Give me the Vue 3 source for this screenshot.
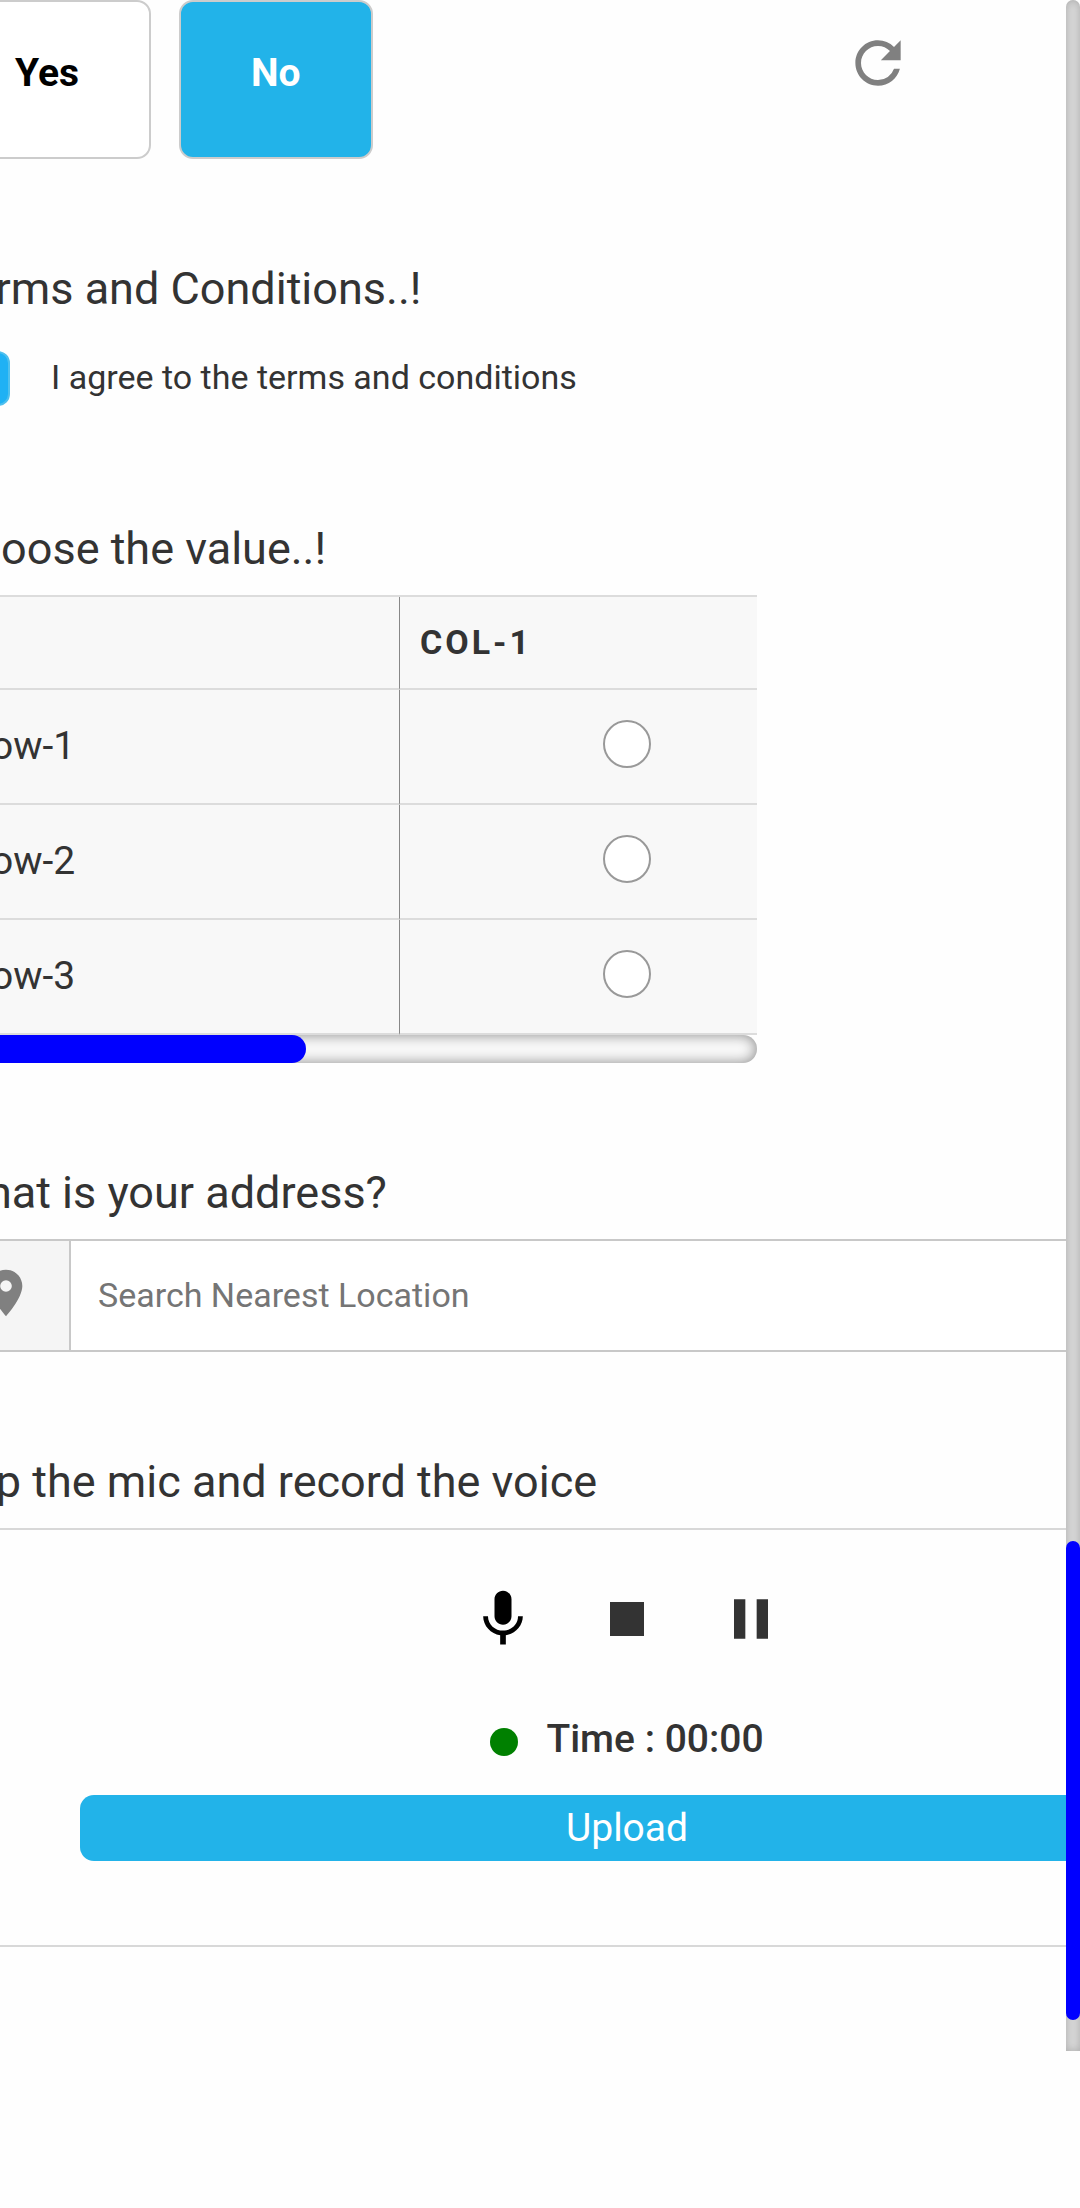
<script setup>
import { ref } from 'vue'

const choice = ref('No')
const options = ['Yes', 'No']
const agreed = ref(true)
const rows = ['Row-1', 'Row-2', 'Row-3']
const picked = ref('')
const address = ref('')
</script>

<template>
  <div class="screen">
    <main class="form">
      <section class="choices">
        <button
          v-for="option in options"
          :key="option"
          type="button"
          class="choice"
          :class="{ active: option === choice }"
          @click="choice = option"
        >{{ option }}</button>
        <button type="button" class="icon-button reset" aria-label="Reset">
          <svg viewBox="0 0 24 24" class="icon"><path d="M17.65 6.35A7.96 7.96 0 0 0 12 4c-4.42 0-7.99 3.58-7.99 8s3.57 8 7.99 8c3.73 0 6.84-2.55 7.73-6h-2.08A5.99 5.99 0 0 1 12 18c-3.31 0-6-2.69-6-6s2.69-6 6-6c1.66 0 3.14.69 4.22 1.78L13 11h7V4l-2.35 2.35z" /></svg>
        </button>
      </section>

      <section>
        <h2>Terms and Conditions..!</h2>
        <label class="terms">
          <input v-model="agreed" type="checkbox" class="tick" />
          <span>I agree to the terms and conditions</span>
        </label>
      </section>

      <section>
        <h2>Choose the value..!</h2>
        <div class="matrix">
          <div class="matrix-view">
            <table>
              <thead>
                <tr>
                  <td></td>
                  <th scope="col">COL-1</th>
                </tr>
              </thead>
              <tbody>
                <tr v-for="row in rows" :key="row">
                  <th scope="row">{{ row }}</th>
                  <td class="cell">
                    <input v-model="picked" type="radio" name="matrix" :value="row" :aria-label="row + ' COL-1'" />
                  </td>
                </tr>
              </tbody>
            </table>
          </div>
          <div class="scroll-x"><div class="thumb-x"></div></div>
        </div>
      </section>

      <section>
        <h2><label for="address">What is your address?</label></h2>
        <div class="search">
          <span class="addon">
            <svg viewBox="0 0 24 24" class="pin"><path d="M12 2C8.13 2 5 5.13 5 9c0 5.25 7 13 7 13s7-7.75 7-13c0-3.87-3.13-7-7-7zm0 9.5a2.5 2.5 0 0 1 0-5 2.5 2.5 0 0 1 0 5z" /></svg>
          </span>
          <input id="address" v-model="address" type="text" placeholder="Search Nearest Location" />
        </div>
      </section>

      <section>
        <h2>Tap the mic and record the voice</h2>
        <div class="recorder">
          <div class="controls">
            <button type="button" class="icon-button mic" aria-label="Record">
              <svg viewBox="0 0 24 24" class="icon"><path d="M12 14c1.66 0 3-1.34 3-3V5c0-1.66-1.34-3-3-3S9 3.34 9 5v6c0 1.66 1.34 3 3 3zm5.3-3c0 3-2.54 5.1-5.3 5.1S6.7 14 6.7 11H5c0 3.41 2.72 6.23 6 6.72V21h2v-3.28c3.28-.48 6-3.3 6-6.72h-1.7z" /></svg>
            </button>
            <button type="button" class="icon-button" aria-label="Stop">
              <svg viewBox="0 0 24 24" class="icon"><path d="M6 6h12v12H6z" /></svg>
            </button>
            <button type="button" class="icon-button" aria-label="Pause">
              <svg viewBox="0 0 24 24" class="icon"><path d="M6 19h4V5H6v14zm8-14v14h4V5h-4z" /></svg>
            </button>
          </div>
          <div class="timer">
            <span class="dot"></span>
            <span>Time : 00:00</span>
          </div>
          <button type="button" class="upload">Upload</button>
        </div>
      </section>
    </main>
    <div class="scroll-y"><div class="thumb-y"></div></div>
  </div>
</template>

<style>
body {
  background: #fefefe;
}
</style>

<style scoped>
* {
  box-sizing: border-box;
}

.screen {
  display: grid;
  grid-template-columns: minmax(0, 1fr) 14px;
  overflow: hidden;
  color: #333;
  font-family: Roboto, "Liberation Sans", sans-serif;
  font-size: 39px;
}

button,
input {
  margin: 0;
  font-family: inherit;
}

button {
  padding: 0;
  border: 0;
  background: none;
  cursor: pointer;
}

/* The form is wider than the window and is scrolled sideways. */
.form {
  display: flex;
  flex-direction: column;
  gap: 104px;
  margin: 0 -241px 0 -53px;
  padding-bottom: 104px;
}

h2 {
  margin: 0 0 20px;
  font-size: 45px;
  font-weight: 400;
  line-height: 52px;
}

.choices {
  display: flex;
  align-items: flex-start;
  gap: 28px;
  margin-left: -4px;
}

.choice {
  height: 159px;
  padding: 0 70px 14px;
  border: 2px solid #ccc;
  border-radius: 14px;
  background: #fff;
  color: #000;
  font-size: 39px;
  font-weight: 700;
}

.choice.active {
  background: #22b3e9;
  color: #fff;
}

.icon-button {
  display: flex;
  color: #333;
}

.icon {
  width: 68px;
  height: 68px;
  fill: currentColor;
}

.reset {
  margin: 29px 0 0 443px;
  color: #808080;
}

.mic {
  color: #000;
}

.terms {
  display: flex;
  align-items: center;
  gap: 41px;
  padding: 16px 8px 13px;
  font-size: 34px;
  line-height: 40px;
}

.terms span {
  padding-bottom: 4px;
}

.tick {
  width: 55px;
  height: 55px;
  border: 2px solid #4fc0ee;
  border-radius: 12px;
  background: #fff;
  appearance: none;
}

.tick:checked {
  background: #1fb1f4;
}

.matrix {
  width: 810px;
  max-width: 100%;
}

.matrix-view {
  overflow: hidden;
}

table {
  width: 906px;
  border-top: 2px solid #dcdcdc;
  border-spacing: 0;
  table-layout: fixed;
  background: #f8f8f8;
}

th,
td {
  height: 115px;
  padding: 0 20px 2px;
  border-bottom: 2px solid #dcdcdc;
  text-align: left;
  font-weight: 400;
}

thead th,
thead td {
  height: 93px;
}

tr > :first-child {
  border-right: 1px solid #888;
}

thead th {
  font-size: 34px;
  font-weight: 700;
  letter-spacing: 3px;
}

.cell {
  padding: 0 0 6px;
  text-align: center;
}

.cell input {
  width: 48px;
  height: 48px;
  border: 2px solid #999;
  border-radius: 50%;
  background: #fff;
  vertical-align: middle;
  appearance: none;
}

.cell input:checked {
  background: #22b3e9;
}

.scroll-x {
  height: 28px;
  border-radius: 14px;
  background: #fafafa;
  box-shadow: inset 0 0 14px #888;
}

.thumb-x {
  width: 359px;
  height: 100%;
  border-radius: 14px;
  background: #00f;
}

.search {
  display: flex;
  height: 113px;
  border: 2px solid #c8c8c8;
}

.addon {
  display: flex;
  align-items: center;
  justify-content: center;
  width: 122px;
  padding: 0 6px 6px 0;
  border-right: 2px solid #c8c8c8;
  background: #f5f5f5;
}

.pin {
  width: 56px;
  height: 56px;
  fill: #808080;
}

.search input {
  flex: 1;
  padding: 0 27px 2px;
  border: 0;
  background: #fff;
  font-size: 34px;
}

.search input::placeholder {
  color: #757575;
}

.recorder {
  display: flex;
  flex-direction: column;
  padding: 55px 133px 84px;
  border-top: 2px solid #d8d8d8;
  border-bottom: 2px solid #d8d8d8;
}

.controls {
  display: flex;
  justify-content: center;
  gap: 56px;
  margin-bottom: 63px;
}

.timer {
  display: flex;
  align-items: center;
  justify-content: center;
  gap: 28px;
  margin-bottom: 33px;
  font-weight: 500;
  line-height: 46px;
}

.dot {
  width: 28px;
  height: 28px;
  margin-top: 6px;
  border-radius: 50%;
  background: green;
}

.upload {
  height: 66px;
  border-radius: 14px;
  background: #22b3e9;
  color: #fff;
  font-size: 39px;
}

.scroll-y {
  display: flex;
  flex-direction: column;
  justify-content: flex-end;
  z-index: 1;
  padding-bottom: 31px;
  border-radius: 7px 7px 0 0;
  background: #d8d8d8;
  box-shadow: inset 0 0 8px #aaa;
}

.thumb-y {
  height: 479px;
  border-radius: 7px;
  background: #00f;
}
</style>
